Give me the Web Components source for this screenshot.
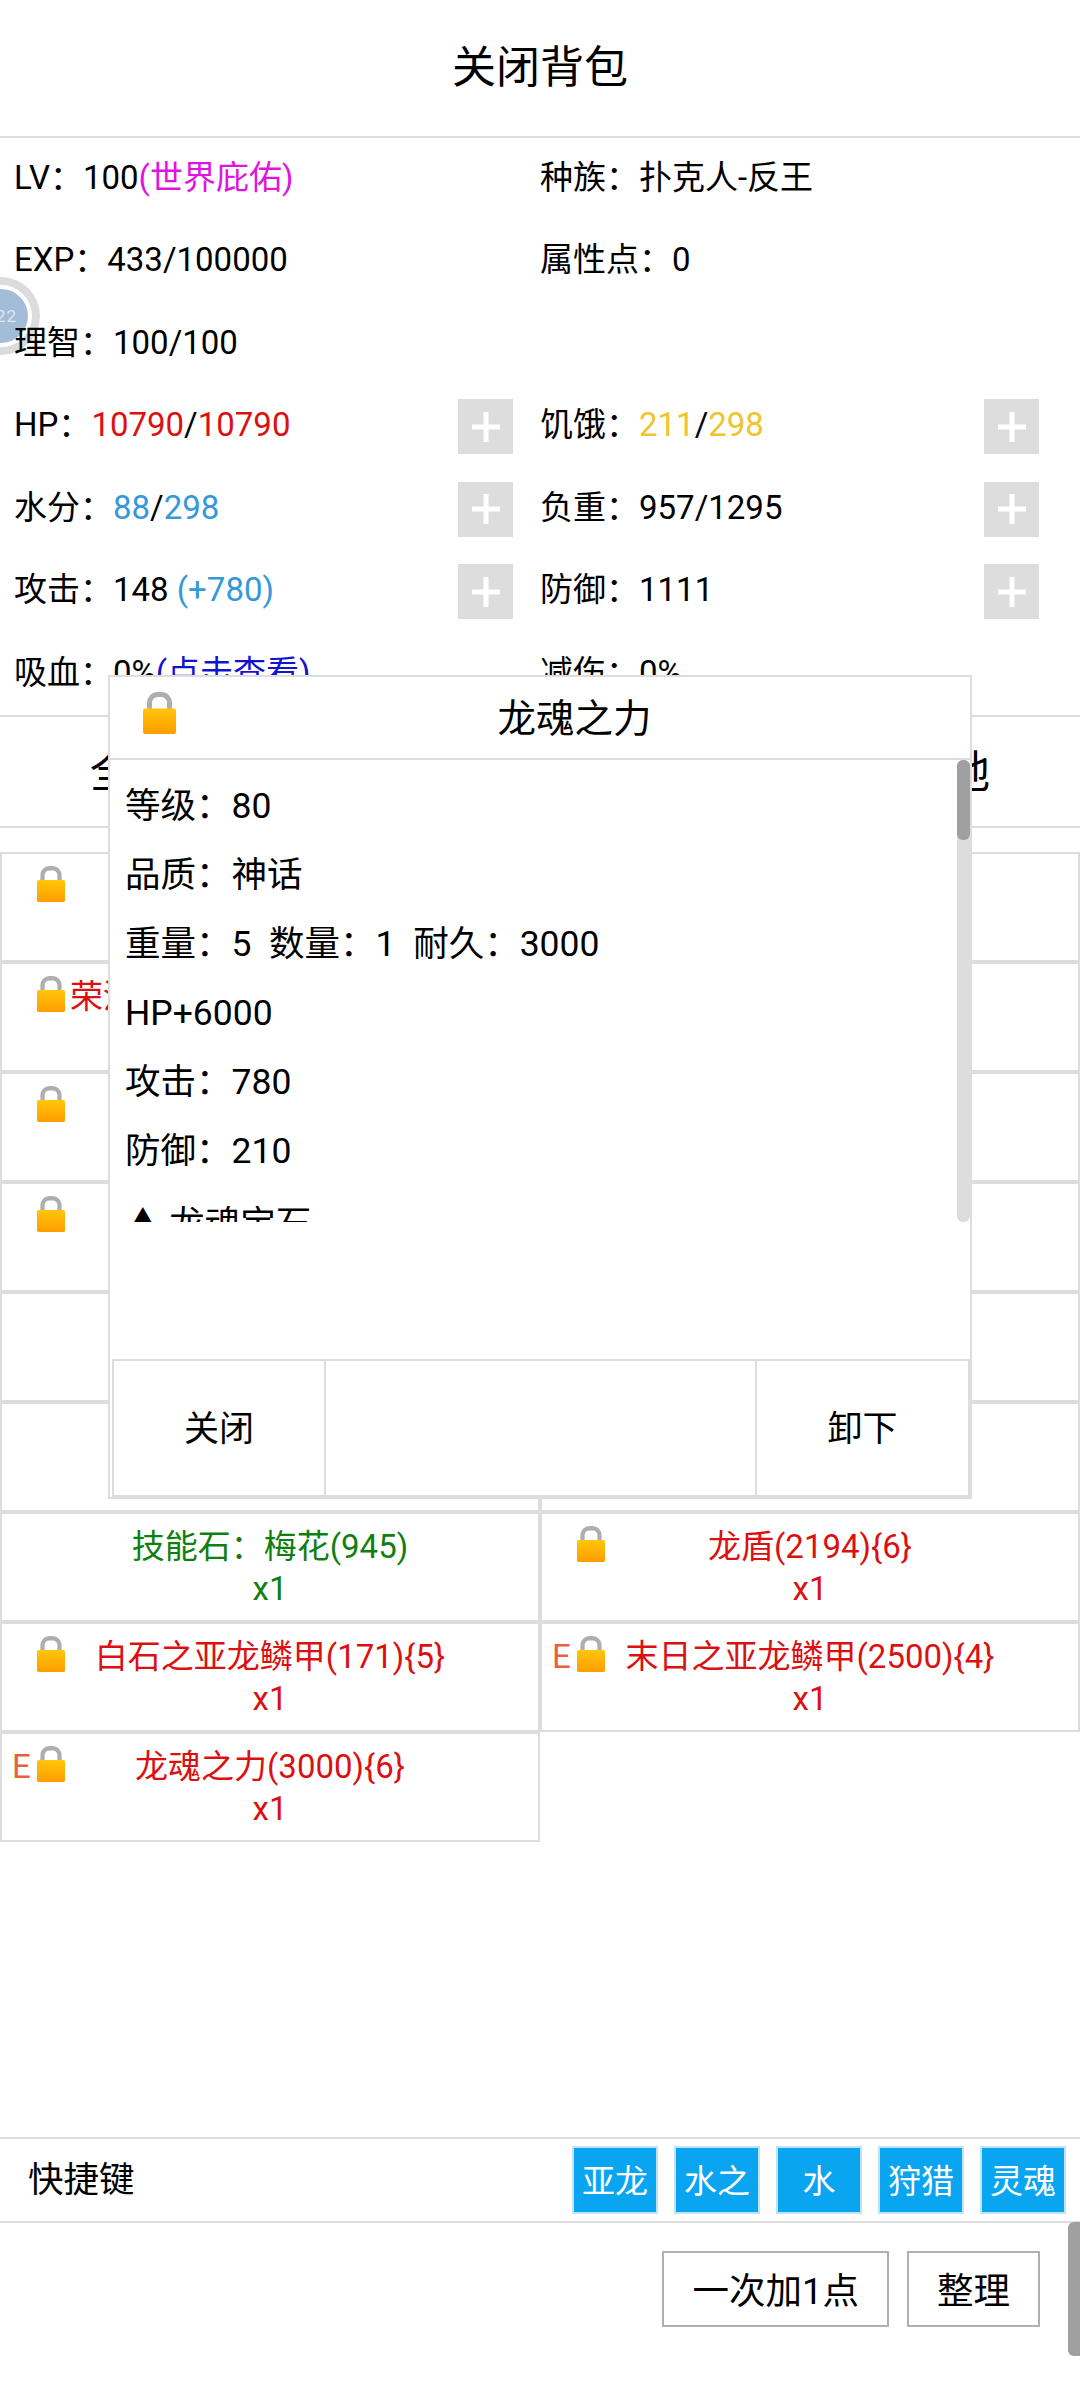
<!DOCTYPE html>
<html lang="zh-CN"><head><meta charset="utf-8"><title>背包</title>
<style>
html,body{margin:0;padding:0;background:#fff}
body{font-family:Roboto,"Noto Sans CJK SC",sans-serif;color:#000}
</style></head><body>
<bag-app></bag-app>
<script>
const FONT='Roboto,"Noto Sans CJK SC",sans-serif';
const C='&#xFF1A;';
class Base extends HTMLElement{
  constructor(){super();this.attachShadow({mode:'open'});}
  render(html){this.shadowRoot.innerHTML=html;}
}
class LockIcon extends Base{
  connectedCallback(){this.render(`<style>:host{display:block;width:var(--w,28px);height:var(--h,36px)}svg{display:block;width:100%;height:100%}</style>
  <svg viewBox="0 0 33 41" preserveAspectRatio="none"><defs><linearGradient id="g" x1="0" y1="0" x2="0" y2="1"><stop offset="0" stop-color="#ffc60a"/><stop offset="1" stop-color="#ff9d00"/></linearGradient></defs>
  <path d="M6.5 18V10.5a8 8 0 0 1 8-8h4a8 8 0 0 1 8 8V18" fill="none" stroke="#aeaeae" stroke-width="5"/>
  <rect x="0" y="16" width="33" height="25" rx="2" fill="url(#g)"/></svg>`);}
}
class StatItem extends Base{
  connectedCallback(){const plus=this.hasAttribute('plus');this.render(`<style>
  :host{display:flex;align-items:center;height:82.5px;font-size:33px;white-space:nowrap}
  .t{flex:1;min-width:0;padding-bottom:5px}
  .p{flex:none;width:55px;height:55px;background:#dddddd;display:flex;align-items:center;justify-content:center;margin-top:4px}
  svg{display:block;width:28px;height:30px}
  </style><div class="t"><slot></slot></div>${plus?'<div class="p"><svg viewBox="0 0 28 30"><path d="M0 12.5H28V17.5H0ZM11.5 0H16.5V30H11.5Z" fill="#fff"/></svg></div>':''}`);}
}
class BagCell extends Base{
  connectedCallback(){
    const lock=this.hasAttribute('lock'),e=this.hasAttribute('equipped'),left=this.hasAttribute('left');
    this.render(`<style>
    :host{display:block;position:relative;box-sizing:border-box;height:110px;border:2px solid #dddddd;padding-top:12px;font-size:33px;line-height:42px;text-align:${left?'left':'center'};${left?'padding-left:68px;':''}color:var(--c,#dc1010)}
    lock-icon{position:absolute;left:35px;top:12px}
    .e{position:absolute;left:10px;top:12px;color:#e8603c;line-height:42px}
    </style>${e?'<span class="e">E</span>':''}${lock?'<lock-icon></lock-icon>':''}<slot></slot>`);}
}
class QuickBtn extends Base{
  connectedCallback(){this.render(`<style>:host{display:flex;align-items:center;justify-content:center;box-sizing:border-box;width:86px;height:68px;background:#0aa5f0;border:2px solid #bfe3f5;color:#fff;font-size:33px;padding-bottom:3px}</style><slot></slot>`);}
}
class OutBtn extends Base{
  connectedCallback(){this.render(`<style>:host{display:flex;align-items:center;justify-content:center;box-sizing:border-box;height:76px;padding:0 var(--pad,28px);border:2px solid #b0b0b0;font-size:36.5px;background:#fff;padding-bottom:2px}</style><slot></slot>`);}
}
class StatusBall extends Base{
  connectedCallback(){this.render(`<style>
  :host{position:absolute;left:-38px;top:277px;width:78px;height:78px;border-radius:50%;background:#dcdcdc;display:flex;align-items:center;justify-content:center}
  .g{width:62px;height:62px;border-radius:50%;background:#fff;display:flex;align-items:center;justify-content:center}
  .i{width:54px;height:54px;border-radius:50%;background:#a3bcd8;color:#dfe6ef;font-size:17px;display:flex;align-items:center;justify-content:flex-end;box-sizing:border-box;padding-right:11px;letter-spacing:1px}
  </style><div class="g"><div class="i">22</div></div>`);}
}
class ItemModal extends Base{
  connectedCallback(){this.render(`<style>
  :host{position:absolute;z-index:2;left:108px;top:675px;width:864px;height:824px;box-sizing:border-box;border:2px solid #dddddd;background:#fff;display:flex;flex-direction:column;font-size:35.5px}
  .h{height:81px;flex:none;border-bottom:2px solid #dddddd;display:flex;align-items:center;padding-left:33px;box-sizing:content-box}
  .h lock-icon{--w:33px;--h:42px;flex:none;margin-top:-9px}
  .h span{flex:1;text-align:center;font-size:38.5px;padding-bottom:6px;padding-left:3px}
  .b{flex:none;height:462px;overflow:hidden;position:relative;box-sizing:border-box;padding:12px 0 0 15px;line-height:69px;white-space:pre}
  .tri{font-family:"Noto Sans CJK SC",sans-serif}
  .track{position:absolute;right:0;top:0;width:13px;height:100%;background:#dddddd;border-radius:6px}
  .thumb{position:absolute;left:0;top:0;width:100%;height:80px;background:#a0a0a0;border-radius:6px}
  .sp{flex:1}
  .f{flex:none;height:138px;margin:0 0 0 2px;width:858px;display:grid;grid-template-columns:210px 1fr 211px;border:2px solid #dddddd;box-sizing:border-box;font-size:35px}
  .f div{display:flex;align-items:center;justify-content:center;padding-bottom:5px}
  .f div:nth-child(2){border-left:2px solid #dddddd;border-right:2px solid #dddddd}
  </style>
  <div class="h"><lock-icon></lock-icon><span>龙魂之力</span></div>
  <div class="b"><div>等级${C}80</div><div>品质${C}神话</div><div>重量${C}5  数量${C}1  耐久${C}3000</div><div>HP+6000</div><div>攻击${C}780</div><div>防御${C}210</div><div><span class="tri">▲</span> 龙魂宝石</div><div class="track"><div class="thumb"></div></div></div>
  <div class="sp"></div>
  <div class="f"><div>关闭</div><div></div><div>卸下</div></div>`);}
}
class BagApp extends Base{
  connectedCallback(){
    const R='#dc1010',G='#0f7f10';
    const s=(c,t)=>`<span style="color:${c}">${t}</span>`;
    this.render(`<style>
    :host{display:flex;flex-direction:column;position:relative;width:1080px;height:2400px;overflow:hidden;background:#fff;font-family:${FONT};color:#000}
    header{flex:none;height:136px;border-bottom:2px solid #dddddd;display:flex;align-items:center;justify-content:center;font-size:44px;box-sizing:content-box}
    header span{margin-top:-8px}
    .stats{position:relative;z-index:1;flex:none;height:577px;overflow:hidden;border-bottom:2px solid #dddddd;display:grid;grid-template-columns:526px 526px;padding-left:14px;align-content:start}
    .stats stat-item{padding-right:27px;box-sizing:border-box;margin-top:-2px;margin-bottom:2px}
    .tabs{flex:none;height:109px;border-bottom:2px solid #dddddd;display:flex;justify-content:space-between;align-items:center;padding:0 90px 0 90px;font-size:44px}
    .tabs span{margin-top:-6px}
    .list{flex:1;min-height:0;padding-top:24px;display:grid;grid-template-columns:540px 540px;grid-auto-rows:110px;align-content:start}
    .quick{flex:none;height:82px;border-top:2px solid #dddddd;border-bottom:2px solid #dddddd;display:flex;align-items:center;padding:0 14px 0 28px;font-size:35.5px}
    .quick .l{flex:1;margin-top:-8px}
    .quick .r{display:flex;gap:16px}
    .bottom{flex:none;height:177px;box-sizing:border-box;display:flex;justify-content:flex-end;align-items:flex-start;gap:18px;padding:28px 40px 0 0}
    .sb{position:absolute;right:0;top:2222px;width:12px;height:134px;background:#a0a0a0;border-radius:6px 0 0 6px}
    </style>
    <status-ball></status-ball>
    <header><span>关闭背包</span></header>
    <section class="stats">
      <stat-item>LV${C}100${s('#df15df','(世界庇佑)')}</stat-item><stat-item>种族${C}扑克人-反王</stat-item>
      <stat-item>EXP${C}433/100000</stat-item><stat-item>属性点${C}0</stat-item>
      <stat-item>理智${C}100/100</stat-item><stat-item></stat-item>
      <stat-item plus>HP${C}${s(R,'10790')}/${s(R,'10790')}</stat-item><stat-item plus>饥饿${C}${s('#f1c32c','211')}/${s('#f1c32c','298')}</stat-item>
      <stat-item plus>水分${C}${s('#3498db','88')}/${s('#3498db','298')}</stat-item><stat-item plus>负重${C}957/1295</stat-item>
      <stat-item plus>攻击${C}148 ${s('#3498db','(+780)')}</stat-item><stat-item plus>防御${C}1111</stat-item>
      <stat-item>吸血${C}0%${s('#1212cf','(点击查看)')}</stat-item><stat-item>减伤${C}0%</stat-item>
    </section>
    <nav class="tabs"><span>全</span><span>地</span></nav>
    <section class="list">
      <bag-cell lock></bag-cell><bag-cell></bag-cell>
      <bag-cell lock left>荣河</bag-cell><bag-cell></bag-cell>
      <bag-cell lock></bag-cell><bag-cell></bag-cell>
      <bag-cell lock></bag-cell><bag-cell></bag-cell>
      <bag-cell></bag-cell><bag-cell></bag-cell>
      <bag-cell></bag-cell><bag-cell></bag-cell>
      <bag-cell style="--c:${G}">技能石${C}梅花(945)<br>x1</bag-cell><bag-cell lock>龙盾(2194){6}<br>x1</bag-cell>
      <bag-cell lock>白石之亚龙鳞甲(171){5}<br>x1</bag-cell><bag-cell lock equipped>末日之亚龙鳞甲(2500){4}<br>x1</bag-cell>
      <bag-cell lock equipped>龙魂之力(3000){6}<br>x1</bag-cell>
    </section>
    <section class="quick"><span class="l">快捷键</span><div class="r"><quick-btn>亚龙</quick-btn><quick-btn>水之</quick-btn><quick-btn>水</quick-btn><quick-btn>狩猎</quick-btn><quick-btn>灵魂</quick-btn></div></section>
    <section class="bottom"><out-btn>一次加1点</out-btn><out-btn>整理</out-btn></section>
    <item-modal></item-modal>
    <div class="sb"></div>`);
  }
}
customElements.define('lock-icon',LockIcon);
customElements.define('stat-item',StatItem);
customElements.define('bag-cell',BagCell);
customElements.define('quick-btn',QuickBtn);
customElements.define('out-btn',OutBtn);
customElements.define('status-ball',StatusBall);
customElements.define('item-modal',ItemModal);
customElements.define('bag-app',BagApp);
</script></body></html>
